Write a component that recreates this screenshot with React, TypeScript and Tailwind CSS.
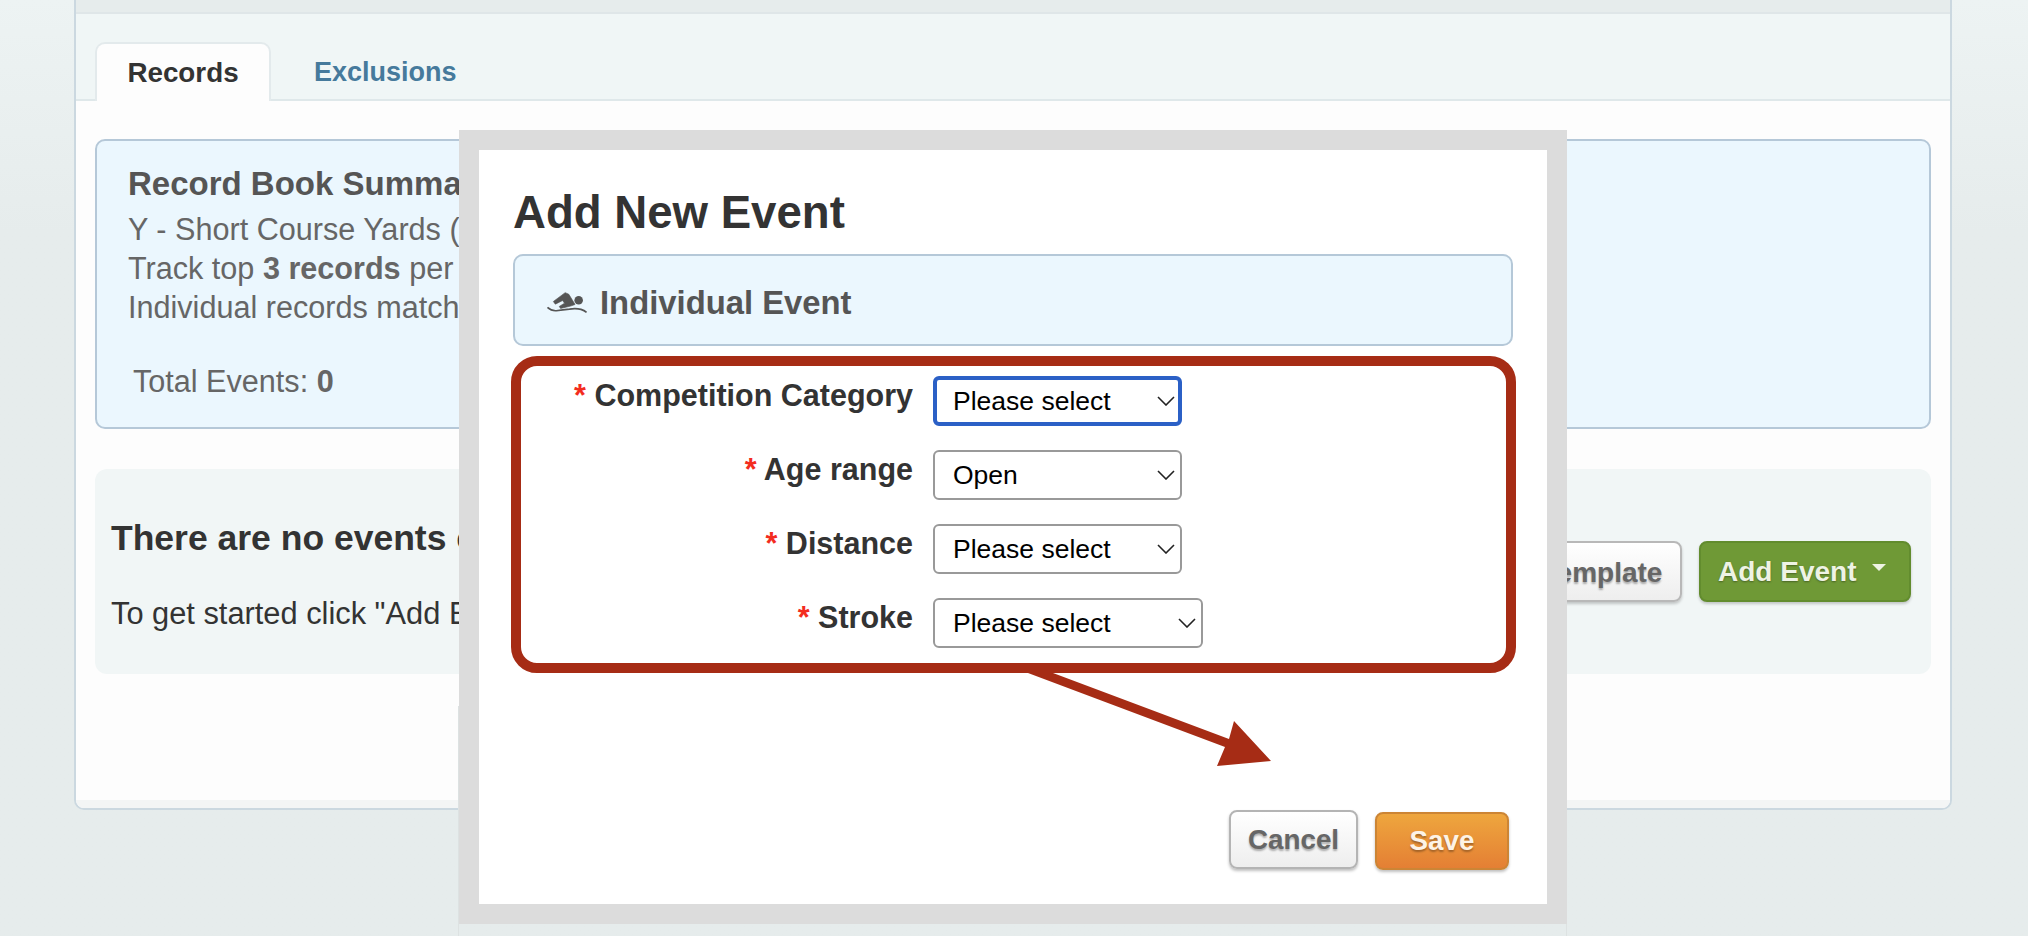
import React from "react";

function Chevron() {
  return (
    <svg width="18" height="10" viewBox="0 0 18 10" className="shrink-0">
      <path d="M1 1 L9 9 L17 1" fill="none" stroke="#222" strokeWidth="1.6" />
    </svg>
  );
}

function Swimmer() {
  return (
    <svg width="42" height="23" viewBox="45 60 125 70" className="relative top-[2px] shrink-0">
      <circle cx="143" cy="88" r="13" fill="#555" />
      <path d="M66 92 L102 65 L113 70 L132 101 L118 106 L88 113 L84 107 L100 97 L94 89 L72 100 Z" fill="#555" stroke="#555" strokeWidth="2" />
      <path d="M48 110 Q60 121 75 120 Q95 117 115 115 Q135 112 150 116 Q160 119 167 125" fill="none" stroke="#555" strokeWidth="5" />
    </svg>
  );
}

function FormRow({ label, value, wide, focused }: { label: string; value: string; wide?: boolean; focused?: boolean }) {
  return (
    <div className="flex items-start">
      <label className="w-[392px] text-right text-[30.5px] leading-[38px] font-bold text-[#333]">
        <span className="text-[#f32c1e]">*</span> {label}
      </label>
      <div
        className={
          "ml-5 flex h-[50px] items-center justify-between rounded-[6px] bg-white text-[26.5px] text-black " +
          (wide ? "w-[270px] " : "w-[249px] ") +
          (focused ? "border-[4px] border-[#2b60c6] pl-[16px] pr-[3px]" : "border-2 border-[#999999] pl-[18px] pr-[5px]")
        }
      >
        <span className="relative top-[1px]">{value}</span>
        <Chevron />
      </div>
    </div>
  );
}

export default function App() {
  return (
    <div className="relative h-[936px] w-[2028px] overflow-hidden bg-gradient-to-b from-[#edf3f3] to-[#e6ecec] to-[25%] font-['Liberation_Sans',Arial,sans-serif]">
      {/* Page panel */}
      <div className="mx-[74px] flex h-[810px] w-[1878px] flex-col rounded-b-[10px] border-x-2 border-b-2 border-[#cbd8e0] bg-[#fdfdfd]">
        <div className="h-[14px] shrink-0 border-b-2 border-[#dfe6e8] bg-[#e6ecec]" />
        <div className="flex h-[87px] shrink-0 items-end border-b-2 border-[#dfe8ea] bg-[#f0f6f6] pl-[19px]">
          <div className="relative top-[2px] flex h-[59px] w-[176px] justify-center rounded-t-[10px] border-x-2 border-t-2 border-[#e3eaec] bg-[#fdfdfd] pt-[11px] text-[27.8px] leading-[36px] font-bold text-[#333]">
            Records
          </div>
          <div className="ml-[43px] h-[60px] pt-[15px] text-[27px] leading-[36px] font-bold text-[#467a9c]">Exclusions</div>
        </div>

        <div className="mx-[19px] mt-[38px] h-[290px] shrink-0 rounded-[10px] border-2 border-[#b5c8d8] bg-[#ebf7fe] pl-[31px] pt-[23px] text-[30.6px] leading-[39px] text-[#666]">
          <h2 className="mb-[6px] text-[33px] leading-[40px] font-bold text-[#555]">Record Book Summary</h2>
          <div>Y - Short Course Yards (25)</div>
          <div>
            Track top <b>3 records</b> per event
          </div>
          <div>Individual records match</div>
          <div className="ml-[5px] mt-[35px]">
            Total Events: <b>0</b>
          </div>
        </div>

        <div className="mx-[19px] mt-10 flex h-[205px] shrink-0 items-center justify-between rounded-[12px] bg-[#f1f6f6] pl-4 pr-5">
          <div className="relative top-[4px] text-[#333]">
            <h3 className="text-[35.5px] leading-[42px] font-bold">There are no events configured</h3>
            <p className="mt-[35px] text-[30.8px] leading-[40px]">To get started click "Add Event"</p>
          </div>
          <div className="flex gap-[17px]">
            <button className="h-[61px] w-[280px] rounded-[8px] border-2 border-[#b8b8b8] bg-gradient-to-b from-white to-[#eeeeee] pl-[120px] pt-[2px] text-[28px] font-bold text-[#666] shadow-[0_2px_3px_rgba(0,0,0,0.2)] [text-shadow:0_2px_2px_rgba(0,0,0,0.3)]">
              Template
            </button>
            <button className="flex h-[61px] w-[212px] items-center rounded-[8px] border-2 border-[#628c2e] bg-[#6f9936] pl-[17px] pt-[1px] text-[28px] font-bold text-[#eef3e4] shadow-[0_2px_3px_rgba(0,0,0,0.2)] [text-shadow:0_1px_2px_rgba(0,0,0,0.35)]">
              Add Event
              <svg width="14" height="7" viewBox="0 0 14 7" className="ml-4 -mt-[10px]">
                <path d="M0 0 H14 L7 7 Z" fill="#eef3e4" />
              </svg>
            </button>
          </div>
        </div>

        <div className="mt-auto h-[8px] shrink-0 rounded-b-[8px] bg-[#f3f5f5]" />
      </div>

      {/* Faint edge of the layer behind the dialog */}
      <div className="absolute left-[458px] top-[706px] h-[230px] w-[1109px] border-x border-[#dde2e2]" />

      {/* Modal */}
      <div className="absolute left-[459px] top-[130px] h-[794px] w-[1108px] border-[20px] border-[#dcdcdc] bg-white pl-[34px] pt-[37px]">
        <h1 className="text-[45.6px] leading-[52px] font-bold text-[#333]">Add New Event</h1>

        <div className="mt-[15px] flex h-[92px] w-[1000px] items-center gap-[12px] rounded-[10px] border-2 border-[#b5c8d8] bg-[#ebf7fe] pl-[31px]">
          <Swimmer />
          <span className="relative top-[3px] text-[32.8px] leading-[40px] font-bold text-[#555]">Individual Event</span>
        </div>

        <div className="-ml-[2px] mt-[10px] flex h-[317px] w-[1005px] flex-col gap-6 rounded-[26px] border-[10px] border-[#a62c15] pt-[10px]">
          <FormRow label="Competition Category" value="Please select" focused />
          <FormRow label="Age range" value="Open" />
          <FormRow label="Distance" value="Please select" />
          <FormRow label="Stroke" value="Please select" wide />
        </div>

        <div className="mt-[137px] flex items-start justify-end gap-[17px] pr-[38px]">
          <button className="h-[59px] w-[129px] rounded-[8px] border-2 border-[#b4b4b4] bg-gradient-to-b from-white to-[#eeeeee] text-[27.8px] font-bold text-[#666] shadow-[0_2px_3px_rgba(0,0,0,0.25)] [text-shadow:0_2px_2px_rgba(0,0,0,0.3)]">
            Cancel
          </button>
          <button className="mt-[2px] h-[58px] w-[134px] rounded-[8px] border-2 border-[#cc8535] bg-gradient-to-b from-[#eea63e] to-[#e47f34] text-[27.8px] font-bold text-[#fdf3e6] shadow-[0_2px_3px_rgba(0,0,0,0.25)] [text-shadow:0_2px_2px_rgba(0,0,0,0.3)]">
            Save
          </button>
        </div>

        {/* Annotation arrow, over the dialog */}
        <svg className="absolute left-[-20px] top-[-20px]" width="1108" height="794" viewBox="459 130 1108 794">
          <polygon
            points="1028,673 1053,673 1229,739 1234,721 1271,761 1217,766 1225,747"
            fill="#a62c15"
          />
        </svg>
      </div>
    </div>
  );
}
